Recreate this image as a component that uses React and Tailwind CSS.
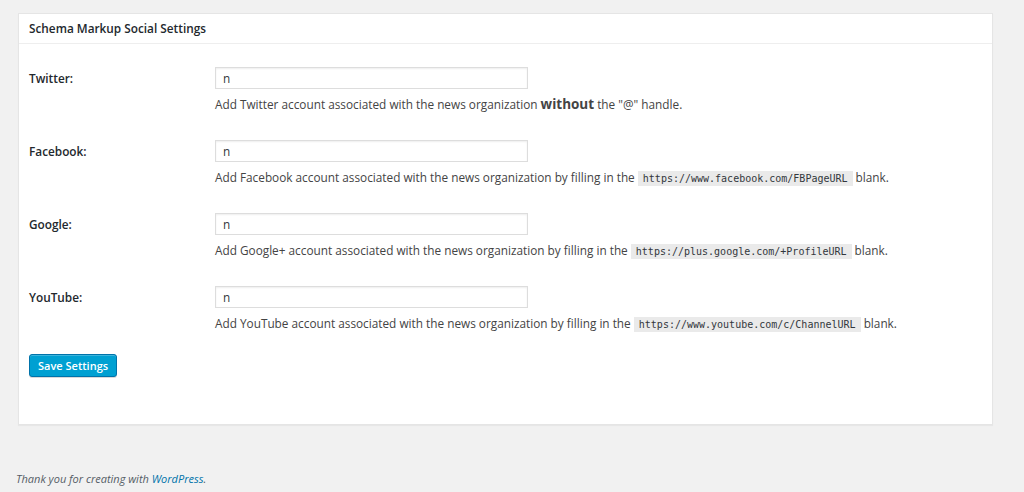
import React from 'react';

const rows = [
  {
    label: 'Twitter:',
    desc: (
      <>
        Add Twitter account associated with the news organization{' '}
        <span className="text-[13.5px] font-bold">without</span> the "@" handle.
      </>
    ),
  },
  {
    label: 'Facebook:',
    desc: (
      <>
        Add Facebook account associated with the news organization by filling in the{' '}
        <Code>https://www.facebook.com/FBPageURL</Code> blank.
      </>
    ),
  },
  {
    label: 'Google:',
    desc: (
      <>
        Add Google+ account associated with the news organization by filling in the{' '}
        <Code>https://plus.google.com/+ProfileURL</Code> blank.
      </>
    ),
  },
  {
    label: 'YouTube:',
    desc: (
      <>
        Add YouTube account associated with the news organization by filling in the{' '}
        <Code>https://www.youtube.com/c/ChannelURL</Code> blank.
      </>
    ),
  },
];

function Code({ children }) {
  return (
    <code
      className="bg-[#eaeaea] px-[5px] pt-[2px] pb-[2px] text-[10px] text-[#32373c]"
      style={{ fontFamily: '"DejaVu Sans Mono", "Liberation Mono", monospace' }}
    >
      {children}
    </code>
  );
}

export default function App() {
  return (
    <div
      className="min-h-[492px] bg-[#f1f1f1] text-[11.8px] text-[#444]"
      style={{ fontFamily: '"Open Sans", "Noto Sans", sans-serif' }}
    >
      <div className="pt-[13px] pl-[18px] pr-[31px]">
        <div className="border border-[#e5e5e5] bg-white shadow-[0_1px_1px_rgba(0,0,0,0.04)]">
          <div className="flex h-[30px] items-center border-b border-[#eee] px-[10px] text-[11.8px] font-semibold text-[#23282d]">
            Schema Markup Social Settings
          </div>
          <div className="px-[10px] pt-[23px] pb-[47px]">
            <div className="flex flex-col gap-[27px]">
              {rows.map((r) => (
                <div key={r.label} className="flex">
                  <div className="w-[186px] shrink-0 pt-[3px] leading-[17px] font-semibold text-[#23282d]">
                    {r.label}
                  </div>
                  <div>
                    <input
                      type="text"
                      defaultValue="n"
                      className="block h-[22px] w-[313px] border border-[#ddd] px-[7px] text-[11.8px] text-[#32373c] shadow-[inset_0_1px_2px_rgba(0,0,0,0.07)] outline-none"
                    />
                    <p className="mt-[6px] h-[18px] leading-[18px] text-[#444]">{r.desc}</p>
                  </div>
                </div>
              ))}
            </div>
            <button className="mt-[22px] block h-[23px] rounded-[3px] border border-[#0073aa] bg-[#00a0d2] px-[8px] text-[11px] leading-none font-semibold text-white shadow-[inset_0_1px_0_rgba(120,200,230,0.5),0_1px_0_rgba(0,0,0,0.15)]">
              Save Settings
            </button>
          </div>
        </div>
      </div>
      <p className="mt-[46px] pl-[16px] text-[11px] italic text-[#555d66]">
        Thank you for creating with <span className="text-[#0073aa]">WordPress</span>.
      </p>
    </div>
  );
}
